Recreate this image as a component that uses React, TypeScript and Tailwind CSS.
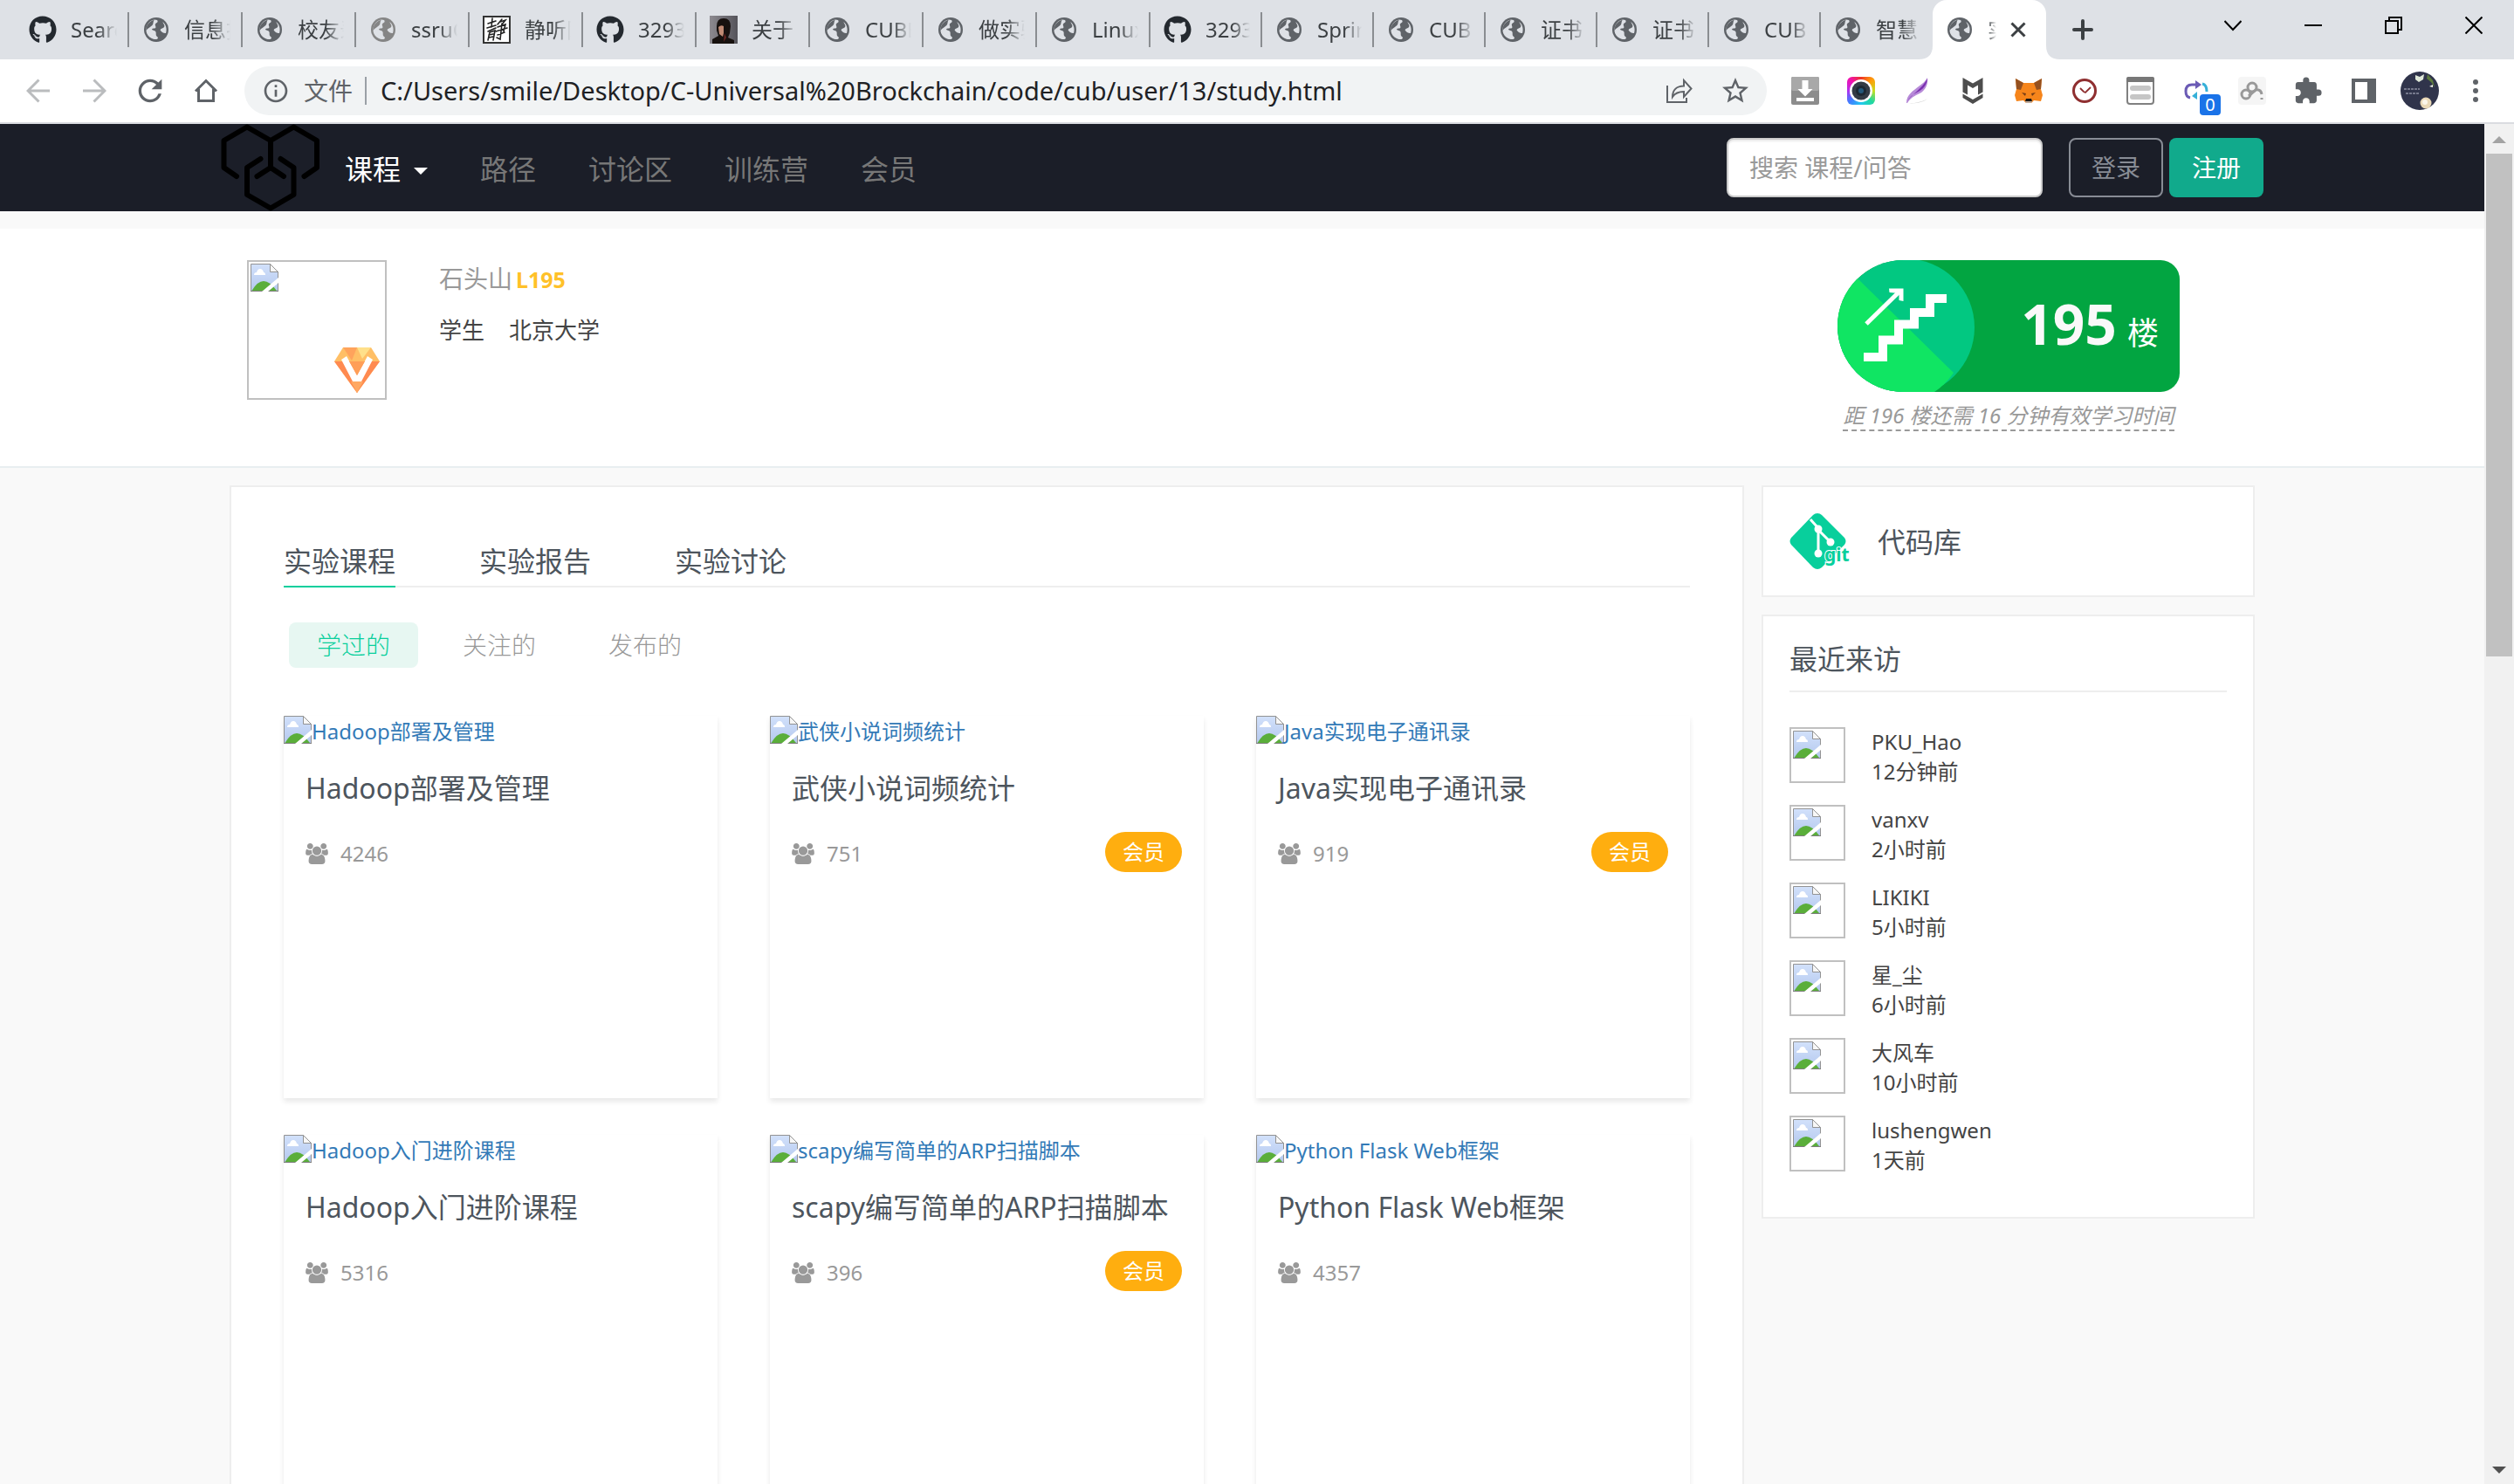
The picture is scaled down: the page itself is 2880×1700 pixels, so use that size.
import React from "react";
import { FaGithub } from "react-icons/fa";
import { MdExtension, MdInfoOutline, MdRefresh, MdStarBorder } from "react-icons/md";

type TabIcon = "github" | "globe" | "globeLight" | "seal" | "portrait";

const wideTabs: { icon: TabIcon; title: string }[] = [
  { icon: "github", title: "Search" },
  { icon: "globe", title: "信息技" },
  { icon: "globe", title: "校友录" },
  { icon: "globeLight", title: "ssruO" },
  { icon: "seal", title: "静听网" },
  { icon: "github", title: "32932" },
  { icon: "portrait", title: "关于" },
  { icon: "globe", title: "CUBE" },
  { icon: "globe", title: "做实验" },
  { icon: "globe", title: "Linux" },
];

const narrowTabs: { icon: TabIcon; title: string }[] = [
  { icon: "github", title: "32932" },
  { icon: "globe", title: "Spring" },
  { icon: "globe", title: "CUB" },
  { icon: "globe", title: "证书" },
  { icon: "globe", title: "证书" },
  { icon: "globe", title: "CUB" },
  { icon: "globe", title: "智慧" },
];

const courses = [
  { name: "Hadoop部署及管理", count: 4246, vip: false },
  { name: "武侠小说词频统计", count: 751, vip: true },
  { name: "Java实现电子通讯录", count: 919, vip: true },
  { name: "Hadoop入门进阶课程", count: 5316, vip: false },
  { name: "scapy编写简单的ARP扫描脚本", count: 396, vip: true },
  { name: "Python Flask Web框架", count: 4357, vip: false },
];

const visitors = [
  { name: "PKU_Hao", time: "12分钟前" },
  { name: "vanxv", time: "2小时前" },
  { name: "LIKIKI", time: "5小时前" },
  { name: "星_尘", time: "6小时前" },
  { name: "大风车", time: "10小时前" },
  { name: "lushengwen", time: "1天前" },
];

function Globe({ className }: { className: string }) {
  return (
    <svg viewBox="0 0 32 32" className={className} aria-hidden="true">
      <circle cx="16" cy="16" r="14" fill="currentColor" />
      <path
        d="M4.5 17.5 C4.2 11 8 5.6 14 4.6 C16.5 4.6 18 5.4 17.6 7 C17.2 8.4 15.2 8.2 14.8 9.8 C14.5 11.4 16 12.6 15.2 14 C14 15 12 14.2 11 15.4 C11.2 17 14 16.4 15.2 18 C16.4 20 15 22 16.4 23.4 C17.4 24.2 18.6 24.8 17.6 26.2 C16.4 27.6 13 27.2 10.4 25.8 C7 24 4.8 21 4.5 17.5 Z"
        fill="#dee1e6"
      />
      <path
        d="M4.4 17 C4.4 11 8 6 13.6 4.7 C12 8 13 9 11.4 11 C9.6 13 6.4 14 4.4 17 Z"
        fill="currentColor"
      />
      <path d="M23.4 7 C27 10 28.6 15 27 20 C24.6 20.4 21.6 18.4 20.6 16.4 C21.4 14 25 14.6 25.4 12 C25.6 10 23.6 9 23.4 7 Z" fill="#dee1e6" />
    </svg>
  );
}

function Favicon({ icon }: { icon: TabIcon }) {
  if (icon === "github") return <FaGithub className="size-8 shrink-0 text-[#24292f]" aria-hidden="true" />;
  if (icon === "globe") return <Globe className="size-8 shrink-0 text-[#5f6368]" />;
  if (icon === "globeLight") return <Globe className="size-8 shrink-0 text-[#858585]" />;
  if (icon === "seal")
    return (
      <svg viewBox="0 0 32 32" className="size-8 shrink-0" aria-hidden="true">
        <rect x="1" y="1" width="30" height="30" fill="#fff" stroke="#333" strokeWidth="2" />
        <g fill="none" stroke="#222" strokeWidth="1.6" strokeLinecap="round">
          <path d="M6 9l9-3M11 3l-1 10M5 14l10-3M6 18l9-4M8 19l-2 9M8 19l6-2-2 11M7 22l5-1M7 25l5-1" />
          <path d="M22 4l-5 6M20 7l6-2-4 5M17 13l9-3-2 8M15 18l13-4M17 22l8-3M22 9l-2 18-4-2" />
        </g>
      </svg>
    );
  return (
    <svg viewBox="0 0 32 32" className="size-8 shrink-0" aria-hidden="true">
      <defs>
        <linearGradient id="wall" x1="0" x2="1">
          <stop offset="0" stopColor="#8d8a90" />
          <stop offset="1" stopColor="#54535a" />
        </linearGradient>
      </defs>
      <rect width="32" height="32" fill="url(#wall)" />
      <path d="M8 12Q8 3 16 3q8 0 8 9l-1 8-2 5 7 3v4H3v-5l7-4-2-6z" fill="#17110f" />
      <path d="M10 13q3-3 6-1v8l-1 4-4-3z" fill="#c08a74" />
      <path d="M17 20l2 5-3 5z" fill="#6b2420" />
    </svg>
  );
}

function BrowserTab({ icon, title, width }: { icon: TabIcon; title: string; width: string }) {
  return (
    <button className={`flex h-[68px] items-center pl-[15px] ${width}`}>
      <Favicon icon={icon} />
      <span className="ml-4 flex-1 overflow-hidden whitespace-nowrap text-left text-2xl text-[#3c4043] [mask-image:linear-gradient(to_right,#000_60%,transparent)]">
        {title}
      </span>
      <span className="ml-3 h-10 w-[2px] bg-[#8a8d91]" />
    </button>
  );
}

function WindowButton({ label, children }: { label: string; children: React.ReactNode }) {
  return (
    <button aria-label={label} className="flex h-[58px] w-[92px] items-center justify-center">
      <svg viewBox="0 0 20 20" className="size-5" fill="none" stroke="#000" strokeWidth="2">
        {children}
      </svg>
    </button>
  );
}

function TabStrip() {
  return (
    <div className="flex h-[68px] shrink-0 bg-[#dee1e6] pl-[18px]">
      {wideTabs.map((t, i) => (
        <BrowserTab key={i} {...t} width="w-[130px]" />
      ))}
      {narrowTabs.map((t, i) => (
        <BrowserTab key={i} {...t} width={i === 6 ? "w-[128px] [&>span:last-child]:invisible" : "w-[128px]"} />
      ))}
      <div className="relative flex h-[68px] w-[130px] items-center rounded-t-2xl bg-white pl-[15px]">
        <svg viewBox="0 0 16 16" className="absolute bottom-0 -left-4 size-4" aria-hidden="true">
          <path d="M16 0v16H0Q16 16 16 0z" fill="#fff" />
        </svg>
        <svg viewBox="0 0 16 16" className="absolute -right-4 bottom-0 size-4" aria-hidden="true">
          <path d="M0 0v16h16Q0 16 0 0z" fill="#fff" />
        </svg>
        <Favicon icon="globe" />
        <span className="ml-4 w-[10px] overflow-hidden whitespace-nowrap text-2xl text-[#3c4043] [mask-image:linear-gradient(to_right,#000,transparent)]">
          实验
        </span>
        <button aria-label="关闭标签页" className="ml-4">
          <svg viewBox="0 0 18 18" className="size-[18px]" fill="none" stroke="#3c4043" strokeWidth="3">
            <path d="M1.5 1.5l15 15M16.5 1.5l-15 15" />
          </svg>
        </button>
      </div>
      <button aria-label="新标签页" className="ml-[30px] flex items-center">
        <svg viewBox="0 0 24 24" className="size-6" fill="none" stroke="#3c4043" strokeWidth="4" strokeLinecap="round">
          <path d="M12 2v20M2 12h20" />
        </svg>
      </button>
      <div className="ml-auto flex">
        <WindowButton label="搜索标签页">
          <path d="M0.5 5l9.5 10 9.5-10" />
        </WindowButton>
        <WindowButton label="最小化">
          <path d="M0 10h20" />
        </WindowButton>
        <WindowButton label="还原">
          <path d="M1 5h14v14H1zM5 5V1h14v14h-4" />
        </WindowButton>
        <WindowButton label="关闭">
          <path d="M0.5 0.5l19 19M19.5 0.5l-19 19" />
        </WindowButton>
      </div>
    </div>
  );
}

function ToolButton({ label, children }: { label: string; children: React.ReactNode }) {
  return (
    <button aria-label={label} className="relative flex h-14 w-16 shrink-0 items-center justify-center text-[#5f6368]">
      {children}
    </button>
  );
}

function Toolbar() {
  return (
    <div className="flex h-[74px] shrink-0 items-center border-b-2 border-[#dadce0] bg-white pl-3 pr-3">
      <ToolButton label="后退">
        <svg viewBox="0 0 28 28" className="size-7" fill="none" stroke="#babcbe" strokeWidth="3">
          <path d="M27 14H3M14.5 1.5L2 14l12.5 12.5" />
        </svg>
      </ToolButton>
      <ToolButton label="前进">
        <svg viewBox="0 0 28 28" className="size-7" fill="none" stroke="#babcbe" strokeWidth="3">
          <path d="M1 14h24M13.5 1.5L26 14 13.5 26.5" />
        </svg>
      </ToolButton>
      <ToolButton label="重新加载">
        <MdRefresh className="size-10" />
      </ToolButton>
      <ToolButton label="主页">
        <svg viewBox="0 0 28 28" className="size-7" fill="none" stroke="currentColor" strokeWidth="3">
          <path d="M2 14.5L14 2.5l12 12M5.5 12v13.500h17V12" />
        </svg>
      </ToolButton>
      <div className="ml-3 flex h-14 flex-1 items-center rounded-full bg-[#f1f3f4] pl-5 pr-1">
        <MdInfoOutline className="size-8 text-[#5f6368]" aria-hidden="true" />
        <span className="ml-4 text-[28px] text-[#5f6368]">文件</span>
        <span className="ml-[14px] h-8 w-[2px] bg-[#9aa0a6]" />
        <input
          aria-label="地址"
          className="ml-4 flex-1 bg-transparent text-[29px] text-[#202124] outline-none"
          defaultValue="C:/Users/smile/Desktop/C-Universal%20Brockchain/code/cub/user/13/study.html"
        />
        <ToolButton label="分享">
          <svg viewBox="0 0 30 30" className="size-[30px]" fill="none" stroke="currentColor" strokeWidth="2">
            <path d="M1 9v19h22v-5" />
            <path d="M7 22c0-8 5-12.5 13-12.5V3l8.500 9.500L20 22v-6c-6 0-10 1.500-13 6z" />
          </svg>
        </ToolButton>
        <ToolButton label="收藏">
          <MdStarBorder className="size-9" />
        </ToolButton>
      </div>
      <div className="ml-3 flex">
        <ToolButton label="下载">
          <svg viewBox="0 0 32 32" className="size-8">
            <rect width="32" height="32" rx="2" fill="#8c8c8c" />
            <rect width="32" height="16" rx="2" fill="#a8a8a8" />
            <path d="M12.5 4h7v10h5L16 22.500 7.500 14h5z" fill="#fff" />
            <path d="M6 24h20v4H6z" fill="#fff" />
          </svg>
        </ToolButton>
        <ToolButton label="截图">
          <span className="flex size-8 items-center justify-center rounded-md bg-[conic-gradient(#ee3524,#ff9d0a,#c8e020,#20d8a0,#20c8f0,#4080ff,#b030f0,#f010b0,#ee3524)]">
            <svg viewBox="0 0 26 26" className="size-[26px]">
              <circle cx="13" cy="13" r="13" fill="#fff" />
              <circle cx="13" cy="13" r="10.5" fill="#333b45" />
              <circle cx="13" cy="13" r="6" fill="#1c2833" />
              <circle cx="13" cy="13" r="3" fill="#24587a" />
            </svg>
          </span>
        </ToolButton>
        <ToolButton label="羽毛笔">
          <svg viewBox="0 0 32 32" className="size-8">
            <path d="M6 31c5-1 14-1 22-6-6 5-13 5-22 6z" fill="#ccc" />
            <path d="M4 30C4 20 12 16 18 11c4-3 8-6 10-10 1 8-2 13-7 17-5 3-11 4-16 12z" fill="#b78ad8" />
            <path d="M4 30C8 21 22 14 28 2c-1 10-8 14-14 17-4 2-7 5-10 11z" fill="#7a2fb0" />
          </svg>
        </ToolButton>
        <ToolButton label="安全">
          <svg viewBox="0 0 32 32" className="size-8" fill="#4d4d4d">
            <path d="M4.500 1L16 7.500 27.500 1v16.500l-5.500 3V9.500L16 13l-6-3.500v11l-5.500-3z" />
            <path d="M4.500 19.500L16 26l11.500-6.500V24L16 31 4.500 24z" />
          </svg>
        </ToolButton>
        <ToolButton label="钱包">
          <svg viewBox="0 0 32 32" className="size-8">
            <path d="M1 2l9 5h12l9-5-1 12 2 7-2 7-8-1-3 3h-6l-3-3-8 1-2-7 2-7z" fill="#f6851b" />
            <path d="M1 2l9 5-3 8-5-1zM31 2l-9 5 3 8 5-1z" fill="#94501f" />
            <path d="M8 18l5 1-1 3zM24 18l-5 1 1 3z" fill="#763d16" />
            <path d="M13 25h6l1 3h-8z" fill="#161616" />
            <path d="M12 28h8l-1 2h-6z" fill="#c0ad9e" />
          </svg>
        </ToolButton>
        <ToolButton label="时钟">
          <svg viewBox="0 0 28 28" className="size-7" fill="none" stroke="#8f2f30">
            <circle cx="14" cy="14" r="12.5" strokeWidth="3" />
            <path d="M9 11l4 4 2 1 6-6" strokeWidth="1.8" />
          </svg>
        </ToolButton>
        <ToolButton label="列表">
          <svg viewBox="0 0 32 32" className="size-8">
            <rect x="1" y="1" width="30" height="30" rx="3" fill="#fff" stroke="#808080" strokeWidth="2" />
            <path d="M0 2q0-2 2-2h28q2 0 2 2v4H0z" fill="#777" />
            <rect x="4" y="10" width="24" height="6" rx="3" fill="#c6c6c6" />
            <rect x="4" y="20" width="24" height="6" rx="3" fill="#c6c6c6" />
          </svg>
        </ToolButton>
        <ToolButton label="转换">
          <svg viewBox="0 0 28 24" className="h-6 w-7" fill="none" strokeWidth="3">
            <path d="M7 20Q2 19 2 12.5 2 5 9 5h6" stroke="#6b5bb5" />
            <path d="M13 0l7 5-7 5z" fill="#6b5bb5" />
            <path d="M21 4q5 1 5 9" stroke="#36b0d8" />
            <path d="M15 13v9l-6-4z" fill="#36b0d8" />
          </svg>
          <span className="absolute top-8 left-9 flex size-6 items-center justify-center rounded bg-[#1a73e8] text-xl text-white">
            0
          </span>
        </ToolButton>
        <ToolButton label="云盘">
          <svg viewBox="0 0 32 32" className="size-8" fill="none" stroke="#999" strokeWidth="3">
            <rect width="32" height="32" rx="4" fill="#f5f5f5" stroke="none" />
            <circle cx="9" cy="20" r="5" />
            <circle cx="16" cy="12" r="5" />
            <path d="M12 22l8-7q6-1 7 5" />
            <path d="M27 24v2" />
          </svg>
        </ToolButton>
        <ToolButton label="扩展程序">
          <MdExtension className="size-[34px]" />
        </ToolButton>
        <ToolButton label="侧边栏">
          <svg viewBox="0 0 28 28" className="size-7">
            <path d="M0 0h28v28H0zM4 4v20h14V4z" fill="currentColor" fillRule="evenodd" />
          </svg>
        </ToolButton>
        <ToolButton label="个人资料">
          <svg viewBox="0 0 44 44" className="size-11">
            <circle cx="22" cy="22" r="22" fill="#30344b" />
            <path d="M17 4l5 2 5-3-1 6-5 3-4-3z" fill="#dfe8d8" />
            <path d="M31 3l6 7 2 8-4-6-5-4z" fill="#5c7a3e" />
            <path d="M33 17l4-2v3z" fill="#f4f6ea" />
            <path d="M4 20h18M6 25h16" stroke="#8d90a3" strokeWidth="1.5" strokeDasharray="3 1" />
            <circle cx="29" cy="36" r="6.5" fill="#ead9b8" />
            <circle cx="28" cy="35" r="3" fill="#fbf6ea" />
          </svg>
        </ToolButton>
        <ToolButton label="菜单">
          <svg viewBox="0 0 8 28" className="h-7 w-2" fill="currentColor">
            <circle cx="4" cy="4" r="3" />
            <circle cx="4" cy="14" r="3" />
            <circle cx="4" cy="24" r="3" />
          </svg>
        </ToolButton>
      </div>
    </div>
  );
}

function BrokenImage() {
  return (
    <svg viewBox="0 0 32 32" className="size-8 shrink-0" aria-hidden="true">
      <defs>
        <linearGradient id="sky" x1="0" x2="0" y1="0" y2="1">
          <stop offset="0" stopColor="#d2e1fb" />
          <stop offset="1" stopColor="#b4c8ee" />
        </linearGradient>
      </defs>
      <path d="M0.5 0.5h22l9 9v22H0.5z" fill="url(#sky)" stroke="#939393" />
      <path d="M22.5 0.5v9h9z" fill="#f7f7f7" stroke="#939393" />
      <path d="M4 13q0-3 3-3 1-4 4-4t4 4q2 0 2 3z" fill="#fff" />
      <path d="M1.5 31Q8 20 15 20t15 11z" fill="#5aae3a" />
      <path d="M0 31.5h32" stroke="#7d7d7d" />
      <path d="M13 32L32 16v6L20 32z" fill="#fff" />
    </svg>
  );
}

function BrandLogo() {
  return (
    <svg viewBox="0 0 114 100" className="h-[100px] w-[114px]" fill="none" stroke="#000" strokeWidth="6" strokeLinecap="round" strokeLinejoin="round">
      <path d="M18 60L3.5 50V19L30 3.5 57 19 83.5 3.5 110 19v31L95.5 60" />
      <path d="M57 19v31M41.5 60L57 50l15 10" />
      <path d="M45.5 40L30 50v31l27 15.5L83.5 81V50L68.5 40" />
    </svg>
  );
}

function NavBar() {
  return (
    <header className="bg-[#1b1e28]">
      <div className="mx-auto flex h-[100px] max-w-[2340px] items-center">
        <BrandLogo />
        <nav className="ml-7 flex items-center gap-[60px] pt-1 text-[32px] leading-none text-[#777]">
          <a href="#courses" className="flex items-center text-white">
            课程
            <span className="mt-1 ml-[15px] border-x-8 border-t-8 border-x-transparent border-t-white" />
          </a>
          <a href="#paths">路径</a>
          <a href="#forum">讨论区</a>
          <a href="#bootcamp">训练营</a>
          <a href="#vip">会员</a>
        </nav>
        <div className="ml-auto flex">
          <input
            type="search"
            aria-label="搜索"
            placeholder="搜索 课程/问答"
            className="h-[68px] w-[362px] rounded-lg border-2 border-[#ccc] bg-white px-6 text-[28px] shadow-[inset_0_2px_2px_rgba(0,0,0,0.08)] placeholder:text-[#999]"
          />
          <button className="ml-[30px] h-[68px] w-[108px] rounded-lg border-2 border-[#888c95] text-[28px] text-[#888c95]">登录</button>
          <button className="ml-[7px] h-[68px] w-[108px] rounded-lg bg-[#11aa8c] text-[28px] text-white">注册</button>
        </div>
      </div>
    </header>
  );
}

function Profile() {
  return (
    <section className="mt-5 border-b-2 border-[#e8eef0] bg-white">
      <div className="mx-auto flex h-[272px] max-w-[2340px] pt-9 pr-24 pl-[30px]">
        <div className="relative size-40 border-2 border-[#c0c0c0] p-[2px]">
          <BrokenImage />
          <svg viewBox="0 0 52 52" className="absolute right-[6px] bottom-[6px] size-[52px]" aria-label="会员">
            <path d="M10 0h32l10 16-26 36L0 16z" fill="#ffbf66" />
            <path d="M10 0h16l-6 15z" fill="#ffa35c" />
            <path d="M26 0h16l-10 13z" fill="#ffe08a" />
            <path d="M0 16h52L26 52z" fill="#ff8a50" />
            <path d="M17 16h18l-9 15z" fill="#ff9a55" />
            <path d="M8 14l6-4 12 22 12-22 6 4-13 25H21z" fill="#fff" />
            <path d="M17 16h18l-9 16z" fill="#ff9f58" />
            <path d="M19 39h14l-7 13z" fill="#ffa862" />
          </svg>
        </div>
        <div className="ml-[60px] text-[26px] text-[#444]">
          <p className="leading-[42px] text-[#999]">
            <span className="text-[28px]">石头山</span>
            <b className="ml-1 text-[25px] text-[#ffc129]">L195</b>
          </p>
          <p className="mt-4 flex gap-7 leading-[42px]">
            <span>学生</span>
            <span>北京大学</span>
          </p>
        </div>
        <div className="ml-auto flex flex-col items-center">
          <div className="relative flex h-[151px] w-[392px] items-baseline justify-end overflow-hidden rounded-l-[76px] rounded-r-[22px] bg-[#02a541] pr-6">
            <svg viewBox="0 0 157 151" className="absolute top-0 left-0 h-[151px] w-[157px]" aria-hidden="true">
              <circle cx="78.5" cy="77" r="78.5" fill="#02c881" />
              <path d="M23 21A78.5 78.5 0 1 0 133 129z" fill="#10e563" />
              <path d="M30 111h22V91.5h18V73.5h18V60h18V44h19" fill="none" stroke="#fff" strokeWidth="10" />
              <path d="M33 73l39-38" fill="none" stroke="#fff" strokeWidth="5" />
              <path d="M59 32.5h16.500V47l-5-1V38l-11-1z" fill="#fff" />
            </svg>
            <span className="text-[64px] leading-[146px] font-bold text-[#f9f9f9]">195</span>
            <span className="ml-3 text-4xl text-white">楼</span>
          </div>
          <em className="mt-[10px] border-b-2 border-dashed border-[#999] text-2xl leading-[33px] text-[#999]">
            距 196 楼还需 16 分钟有效学习时间
          </em>
        </div>
      </div>
    </section>
  );
}

function UsersIcon() {
  return (
    <svg viewBox="0 0 1920 1792" className="mt-1 h-6 w-[26px]" fill="currentColor" aria-hidden="true">
      <g transform="translate(0 1536) scale(1 -1)">
        <path id="side" d="M593 640q-162 -5 -265 -128h-134q-82 0 -138 40.5t-56 118.5q0 353 124 353q6 0 43.5 -21t97.5 -42.5t119 -21.5q67 0 133 23q-5 -37 -5 -66q0 -159 93 -287zM640 1280q0 -106 -75 -181t-181 -75t-181 75t-75 181t75 181t181 75t181 -75t75 -181z" />
        <use href="#side" transform="translate(1920 0) scale(-1 1)" />
        <path d="M1664 3q0 -120 -73 -189.5t-194 -69.5h-874q-121 0 -194 69.5t-73 189.5q0 53 3.5 103.5t14 109t26.5 108.5t43 97.5t62 81t85.5 53.5t111.5 20q10 0 43 -21.5t73 -48t107 -48t135 -21.5t135 21.5t107 48t73 48t43 21.5q61 0 111.5 -20t85.5 -53.5t62 -81t43 -97.5t26.5 -108.5t14 -109t3.5 -103.5zM1344 896q0 -159 -112.5 -271.5t-271.5 -112.5t-271.5 112.5t-112.5 271.5t112.5 271.5t271.5 112.5t271.5 -112.5t112.5 -271.5z" />
      </g>
    </svg>
  );
}

function CourseCard({ name, count, vip }: { name: string; count: number; vip: boolean }) {
  return (
    <article className="h-[438px] shadow-[0_4px_6px_rgba(0,0,0,0.09)]">
      <a href="#course" className="flex h-8 items-center text-2xl leading-8 text-[#337ab7]">
        <BrokenImage />
        <span className="pt-1">{name}</span>
      </a>
      <h3 className="mt-[29px] px-[25px] text-[32px] leading-[44px] whitespace-nowrap text-[#4d555d]">{name}</h3>
      <div className="mt-7 flex h-[46px] items-center px-[25px] text-2xl text-[#999]">
        <UsersIcon />
        <span className="ml-[14px] pt-1">{count}</span>
        {vip && (
          <span className="ml-auto flex h-[46px] items-center rounded-full bg-[#ffae0f] px-5 text-white">会员</span>
        )}
      </div>
    </article>
  );
}

function StudyPanel() {
  return (
    <main className="h-[1300px] min-w-0 flex-1 border-2 border-[#eee] bg-white px-[60px] pt-[57px]">
      <nav className="flex gap-24 border-b-2 border-[#eee] text-[32px] text-[#4d555d]">
        <a href="#lab" className="-mb-[2px] border-b-2 border-[#08cf9c] leading-[56px]">实验课程</a>
        <a href="#report" className="leading-[56px]">实验报告</a>
        <a href="#talk" className="leading-[56px]">实验讨论</a>
      </nav>
      <div className="mt-10 flex gap-[19px] pl-[6px] text-[28px] font-light text-[#999]">
        <button className="h-[52px] rounded-lg bg-[#e7f7f2] px-8 text-[#08cf9c]">学过的</button>
        <button className="h-[52px] px-8">关注的</button>
        <button className="h-[52px] px-8">发布的</button>
      </div>
      <div className="mt-[55px] grid grid-cols-3 gap-x-[60px] gap-y-[42px]">
        {courses.map((c) => (
          <CourseCard key={c.name} {...c} />
        ))}
      </div>
    </main>
  );
}

function SidePanels() {
  return (
    <aside className="flex w-[565px] shrink-0 flex-col gap-5">
      <a href="#repo" className="flex h-32 items-center border-2 border-[#eee] bg-white pl-[30px] text-[32px] text-[#4d555d]">
        <svg viewBox="0 0 70 64" className="h-16 w-[70px]" aria-hidden="true">
          <path d="M32 0q3 0 5 2l26 26q3 4 0 8L37 62q-5 4-10 0L2 36q-3-4 0-8L27 2q2-2 5-2z" fill="#08cf9c" />
          <path d="M24 7l9 10v28M33 19l14 14" fill="none" stroke="#fff" strokeWidth="3" />
          <circle cx="33" cy="18" r="4.5" fill="#fff" />
          <circle cx="47" cy="33" r="4.5" fill="#fff" />
          <circle cx="33" cy="46" r="4.5" fill="#fff" />
          <text x="40" y="55" fontSize="21" fontWeight="700" fill="#08cf9c" stroke="#fff" strokeWidth="2" paintOrder="stroke">
            git
          </text>
        </svg>
        <span className="ml-[31px] pt-[2px]">代码库</span>
      </a>
      <section className="border-2 border-[#eee] bg-white px-[30px] pt-6 pb-12">
        <h2 className="border-b-2 border-[#eee] pb-3 text-[32px] leading-[49px] text-[#4d555d]">最近来访</h2>
        <ul className="mt-10 flex flex-col gap-[21px]">
          {visitors.map((v) => (
            <li key={v.name} className="flex text-2xl leading-[34px] text-[#444]">
              <div className="size-16 border-2 border-[#c0c0c0] p-[2px]">
                <BrokenImage />
              </div>
              <div className="ml-[30px]">
                <p>{v.name}</p>
                <p>{v.time}</p>
              </div>
            </li>
          ))}
        </ul>
      </section>
    </aside>
  );
}

function Scrollbar() {
  return (
    <div className="flex w-[34px] shrink-0 flex-col items-center bg-[#f1f1f1]" aria-hidden="true">
      <svg viewBox="0 0 34 34" className="size-[34px]">
        <path d="M9 22l8-8 8 8z" fill="#a3a3a3" />
      </svg>
      <div className="h-[576px] w-[30px] bg-[#c1c1c1]" />
      <svg viewBox="0 0 34 34" className="mt-auto size-[34px]">
        <path d="M9 14l8 8 8-8z" fill="#505050" />
      </svg>
    </div>
  );
}

export default function App() {
  return (
    <div className="flex h-screen flex-col overflow-hidden bg-[#f9f9f9] font-['Noto_Sans','Noto_Sans_CJK_SC',sans-serif]">
      <TabStrip />
      <Toolbar />
      <div className="flex min-h-0 flex-1">
        <div className="flex min-w-0 flex-1 flex-col overflow-hidden">
          <NavBar />
          <Profile />
          <div className="mx-auto mt-5 flex w-full max-w-[2340px] items-start gap-5 px-[10px]">
            <StudyPanel />
            <SidePanels />
          </div>
        </div>
        <Scrollbar />
      </div>
    </div>
  );
}
